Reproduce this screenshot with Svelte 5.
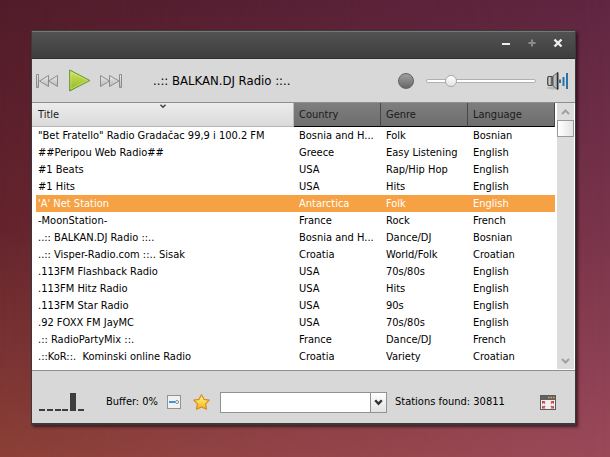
<script>
  const stations = [
    ['"Bet Fratello" Radio Gradačac 99,9 i 100.2 FM', 'Bosnia and H...', 'Folk', 'Bosnian'],
    ['##Peripou Web Radio##', 'Greece', 'Easy Listening', 'English'],
    ['#1 Beats', 'USA', 'Rap/Hip Hop', 'English'],
    ['#1 Hits', 'USA', 'Hits', 'English'],
    ["'A' Net Station", 'Antarctica', 'Folk', 'English'],
    ['-MoonStation-', 'France', 'Rock', 'French'],
    ['..:: BALKAN.DJ Radio ::..', 'Bosnia and H...', 'Dance/DJ', 'Bosnian'],
    ['..:: Visper-Radio.com ::.. Sisak', 'Croatia', 'World/Folk', 'Croatian'],
    ['.113FM Flashback Radio', 'USA', '70s/80s', 'English'],
    ['.113FM Hitz Radio', 'USA', 'Hits', 'English'],
    ['.113FM Star Radio', 'USA', '90s', 'English'],
    ['.92 FOXX FM JayMC', 'USA', '70s/80s', 'English'],
    ['.:: RadioPartyMix ::.', 'France', 'Dance/DJ', 'French'],
    ['.::KoR::.  Kominski online Radio', 'Croatia', 'Variety', 'Croatian']
  ];
  const levels = [2, 2, 2, 2, 18, 2];
  let selected = $state(4);
  let volume = $state(19);
</script>

<main>
  <section class="window">
    <header>
      <button aria-label="Minimize"><svg width="10" height="10"><path d="M1 6h8" stroke="#eee" stroke-width="2" /></svg></button>
      <button aria-label="Maximize" disabled><svg width="10" height="10"><path d="M5 1.500v7M1.500 5h7" stroke="#8b8b87" stroke-width="2" /></svg></button>
      <button aria-label="Close"><svg width="10" height="10"><path d="M1.500 1.500l7 7M8.500 1.500l-7 7" stroke="#eee" stroke-width="2.400" /></svg></button>
    </header>

    <div class="toolbar">
      <button aria-label="Previous">
        <svg width="23" height="14" fill="url(#silver)" stroke="#8c8c8c">
          <defs><linearGradient id="silver" x2="0" y2="1"><stop stop-color="#eee" /><stop offset="1" stop-color="#b4b4b4" /></linearGradient></defs>
          <path d="M.5 .5h2v13h-2zM12.500 1.500v11L3.500 7zM21.500 1.500v11L12.500 7z" />
        </svg>
      </button>
      <button class="play" aria-label="Play">
        <svg width="22" height="23">
          <defs><linearGradient id="lime" x2="0" y2="1"><stop stop-color="#d3e45c" /><stop offset="1" stop-color="#91b829" /></linearGradient></defs>
          <path d="M.7 1v21L20.800 11.500z" fill="url(#lime)" stroke="#5d9537" stroke-linejoin="round" />
          <path d="M1.900 3v17L18.500 11.500z" fill="none" stroke="#e0ec86" stroke-width=".7" opacity=".7" />
        </svg>
      </button>
      <button aria-label="Next">
        <svg width="23" height="14" fill="url(#silver)" stroke="#8c8c8c">
          <path d="M19.500 .5h2v13h-2zM.5 1.500v11L9.500 7zM9.500 1.500v11L19 7z" />
        </svg>
      </button>
      <h1>..:: BALKAN.DJ Radio ::..</h1>
      <button class="record" aria-label="Record"></button>
      <input class="volume" type="range" min="0" max="100" aria-label="Volume" bind:value={volume} />
      <button aria-label="Mute">
        <svg width="22" height="18">
          <defs><linearGradient id="metal"><stop stop-color="#555" /><stop offset=".45" stop-color="#d0d0d0" /><stop offset="1" stop-color="#777" /></linearGradient></defs>
          <ellipse cx="6" cy="16" rx="6" ry="1.500" fill="#999" opacity=".5" />
          <path d="M1 4.500h4v9H1q-1.500-4.500 0-9z" fill="url(#metal)" stroke="#484848" />
          <path d="M5.500 4.500L10.500 .5v17L5.500 13.500z" fill="url(#metal)" stroke="#555" stroke-width=".8" />
          <path d="M10.800 .5v17" stroke="#252525" stroke-width="1.300" />
          <path d="M13 7.500v3.500" stroke="#2d72a3" stroke-width="2" />
          <path d="M16.500 5v9" stroke="#2d72a3" stroke-width="2" />
          <path d="M20 1v16" stroke="#2d72a3" stroke-width="2" />
        </svg>
      </button>
    </div>

    <div class="list">
      <table>
        <thead>
          <tr>
            <th class="sorted" aria-sort="ascending">Title<svg class="sort" width="7" height="5"><path d="M1 .8l2.500 2.500L6 .8" fill="none" stroke="#444" stroke-width="1.500" /></svg></th>
            <th>Country</th>
            <th>Genre</th>
            <th>Language</th>
          </tr>
        </thead>
        <tbody>
          {#each stations as station, i}
            <tr class:selected={selected === i} onclick={() => (selected = i)}>
              {#each station as value}<td>{value}</td>{/each}
            </tr>
          {/each}
        </tbody>
      </table>
      <div class="scrollbar">
        <button aria-label="Scroll up"><svg width="9" height="6"><path d="M1 5l3.500-3.500L8 5" fill="none" stroke="#a0a0a0" stroke-width="2" /></svg></button>
        <div class="thumb"></div>
        <button class="down" aria-label="Scroll down"><svg width="9" height="6"><path d="M1 1l3.500 3.500L8 1" fill="none" stroke="#a0a0a0" stroke-width="2" /></svg></button>
      </div>
    </div>

    <footer>
      <div class="meter">
        {#each levels as level}<i style:height="{level}px"></i>{/each}
      </div>
      <span class="buffer">Buffer: 0%</span>
      <button aria-label="Buffer settings">
        <svg width="14" height="14">
          <rect x=".5" y=".5" width="13" height="13" fill="#f1f1f1" stroke="#929292" />
          <path d="M2 7h6" stroke="#3d96dc" stroke-width="2" /><circle cx="10" cy="7" r="1.500" fill="#fff" stroke="#7890a0" />
        </svg>
      </button>
      <button class="favorite" aria-label="Favorites">
        <svg width="17" height="16">
          <defs><linearGradient id="gold" x2="0" y2="1"><stop stop-color="#fff4a0" /><stop offset=".5" stop-color="#fcd94d" /><stop offset="1" stop-color="#f5ae21" /></linearGradient></defs>
          <path d="M8.500 .8l2.500 4.500 5.200.9-3.600 3.700.9 5.300-5-2.200-5 2.200 .9-5.300L.8 6.200 6 5.300z" fill="url(#gold)" stroke="#d98b20" stroke-width="1.200" stroke-linejoin="round" />
        </svg>
      </button>
      <label class="combo">
        <select aria-label="Search stations"><option></option><option>Folk</option><option>Hits</option><option>Rock</option></select>
        <span class="arrow"><svg width="9" height="7"><path d="M1.200 1.200l3.300 3.600 3.300-3.600" fill="none" stroke="#333" stroke-width="2.400" /></svg></span>
      </label>
      <span>Stations found: 30811</span>
      <button class="expand" aria-label="Full screen">
        <svg width="16" height="15">
          <rect x=".5" y=".5" width="15" height="14" fill="#eee" stroke="#5a5a5a" />
          <path d="M1 1h14v4H1z" fill="#626262" />
          <path d="M8 2.500h1.500M10.500 2.500H12M13 2.500h1.500" stroke="#e9a83c" stroke-width="1.500" />
          <g fill="#cb4a4f"><path d="M2 6h3.500L4.500 7l1 1-1 1-1-1L2 9zM14 6h-3.500l1 1-1 1 1 1 1-1L14 9zM2 13.500h3.500l-1-1 1-1-1-1-1 1L2 10.500zM14 13.500h-3.500l1-1-1-1 1-1 1 1 1.500-1z" /></g>
        </svg>
      </button>
    </footer>
  </section>
</main>

<style>
  :global(body) { margin: 0; }
  * { box-sizing: border-box; }
  main {
    position: relative;
    z-index: 0;
    min-height: 100vh;
    padding: 30px 34px 32px 31px;
    background: linear-gradient(#521c2a, #65242d 50%, #8b4037);
    font: 11px/16px "DejaVu Sans Condensed", "DejaVu Sans", sans-serif;
    color: #000;
  }
  main::before {
    content: "";
    position: absolute;
    inset: 0;
    z-index: -1;
    background: linear-gradient(#602641, #79344b 50%, #9a4959);
    mask-image: linear-gradient(to right, transparent, #000);
  }
  button {
    display: flex;
    align-items: center;
    justify-content: center;
    flex: none;
    padding: 0;
    border: 0;
    background: none;
    font: inherit;
  }
  svg { display: block; flex: none; }
  .window {
    border: 1px solid #3a3a3a;
    border-bottom-width: 2px;
    border-radius: 2px 2px 0 0;
    background: #d8d8d8;
    box-shadow: 2px 2px 3px rgba(20, 5, 10, .6);
  }
  header {
    display: flex;
    align-items: center;
    justify-content: flex-end;
    gap: 16px;
    height: 28px;
    padding: 0 12px 4px;
    border-top: 1px solid #777;
    border-bottom: 1px solid #302e2f;
    background: linear-gradient(#525252, #3e3e3e);
  }
  .toolbar {
    display: flex;
    align-items: center;
    height: 44px;
    padding: 0 6px 0 4px;
    border-bottom: 1px solid #8e8e8e;
  }
  .play { margin: 0 9px 0 10px; }
  h1 {
    flex: 1;
    margin: 0 0 0 30px;
    font-size: 13px;
    font-weight: 400;
    white-space: nowrap;
  }
  .record {
    width: 16px;
    height: 16px;
    border: 1px solid #626262;
    border-radius: 50%;
    background: linear-gradient(#a0a0a0, #686868);
  }
  .volume {
    width: 110px;
    height: 14px;
    margin: 0 11px 0 12px;
    appearance: none;
    background: none;
  }
  .volume::-webkit-slider-runnable-track {
    height: 4px;
    border: 1px solid #b1b1b1;
    border-radius: 2px;
    background: #fff;
  }
  .volume::-webkit-slider-thumb {
    width: 12px;
    height: 12px;
    margin-top: -5px;
    appearance: none;
    border: 1px solid #a8a8a8;
    border-radius: 50%;
    background: linear-gradient(#fff, #e4e4e4);
  }
  .list {
    display: flex;
    gap: 2px;
    padding-right: 1px;
    border-bottom: 1px solid #8e8e8e;
    background: #fff;
  }
  table {
    flex: 1;
    width: 0;
    table-layout: fixed;
    border-spacing: 0;
    margin-bottom: 5px;
  }
  th {
    width: 87px;
    height: 24px;
    padding: 1px 0 0 5px;
    border-right: 1px solid #484848;
    border-bottom: 1px solid #050505;
    background: linear-gradient(#7e7e7e, #6e6e6e);
    color: #1b1b1b;
    font-weight: 400;
    text-align: left;
  }
  .sorted {
    position: relative;
    width: auto;
    padding-left: 6px;
    border-right-color: #bbb;
    border-bottom-color: #b5b5b5;
    background: linear-gradient(#ececec, #dadada);
  }
  .sort {
    position: absolute;
    top: 1px;
    left: 50%;
    transform: translateX(-50%);
  }
  td {
    height: 17px;
    padding: 1px 0 0 5px;
    overflow: hidden;
    text-overflow: ellipsis;
    white-space: pre;
  }
  td:first-child { padding-left: 2px; border-left: 4px solid #fff; }
  .selected { background: #f7a145; color: #fff; }
  .scrollbar {
    display: flex;
    flex-direction: column;
    width: 17px;
    background: #dcdcdc;
    margin-bottom: 1px;
  }
  .scrollbar button { height: 17px; }
  .scrollbar .down { margin-top: auto; }
  .thumb {
    height: 17px;
    border: 1px solid #999;
    background: linear-gradient(to right, #fff, #e4e4e4);
  }
  footer {
    display: flex;
    align-items: center;
    height: 52px;
    padding: 10px 19px 0 7px;
    white-space: nowrap;
  }
  .meter {
    display: flex;
    align-items: flex-end;
    justify-content: space-between;
    width: 45px;
    height: 18px;
  }
  .meter i { width: 6px; background: #3d3d3d; }
  .buffer { width: 61px; margin-left: 22px; }
  .favorite { margin: 0 10px 0 12px; }
  .combo {
    display: flex;
    flex: 0 1 167px;
    height: 21px;
    margin-right: 8px;
    position: relative;
  }
  select {
    width: 100%;
    padding: 0 22px 0 4px;
    appearance: none;
    border: 1px solid #929292;
    border-radius: 0;
    background: #fff;
    font: inherit;
  }
  .arrow {
    position: absolute;
    inset: 1px 1px 1px auto;
    display: grid;
    place-items: center;
    width: 16px;
    border-left: 1px solid #929292;
    background: linear-gradient(#fff, #e2e2e2);
    pointer-events: none;
  }
  .expand { margin-left: auto; }
</style>
